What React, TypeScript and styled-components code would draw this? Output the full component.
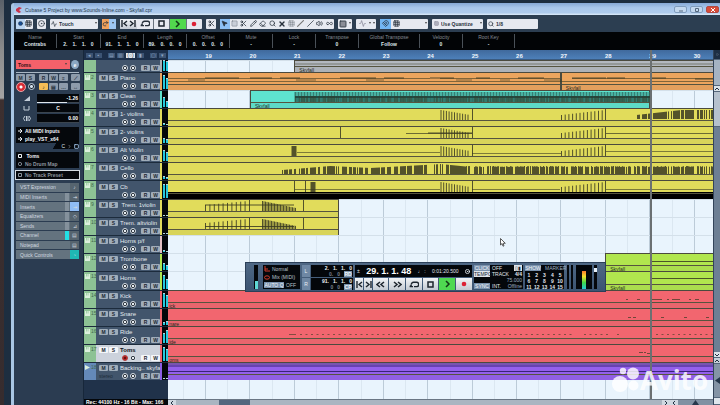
import React from "react";
import styled, { createGlobalStyle, css } from "styled-components";
import {
  Activity, ChevronRight, Circle, CircleDot, Eraser, Grid3x3, Infinity as Glue, Magnet, MousePointer2,
  Pencil, Play, Redo2, Scissors, Search, Slash, Square, Volume2, X,
} from "lucide-react";

const Global = createGlobalStyle`
  * { box-sizing: border-box; }
  body { margin: 0; background: #1d2e40; font: 5px/6px "Liberation Sans", Arial, sans-serif; color: #dfe6ec; }
  button, input, select { font: inherit; color: inherit; margin: 0; padding: 0; border: 0; background: none; border-radius: 0; }
  svg { display: block; flex: none; }
`;

/* ---------- timeline geometry ---------- */
const FIRST_BAR = 18.155;
const BAR_SPAN = 12.27;
const at = (bar: number) => ((bar - FIRST_BAR) / BAR_SPAN) * 100;

/* ---------- window ---------- */
const Desktop = styled.div`
  min-height: 100vh;
  display: grid;
  grid-template-columns: 4px 7px 1fr;
  background: #1d2e40;
`;
const Wallpaper = styled.div`
  background: linear-gradient(#596069 0, #8b8c8c 50px, #a3a3a3 98px, #3d3030 100px, #362c2e 100%);
`;
const Window = styled.main`
  grid-column: 3;
  min-width: 0;
  margin-top: 3px;
  display: flex;
  flex-direction: column;
  border-left: 3px solid #a9c6e4;
  border-top-left-radius: 3px;
  background: #2b3c50;
`;
const TitleBar = styled.header`
  height: 12px;
  display: flex;
  align-items: center;
  gap: 3px;
  padding: 1px 1px 0 2px;
  color: #26384c;
  background: linear-gradient(#86a9d6, #a9c8ec 40%, #aecbec 80%, #dcebfa);
`;
const Title = styled.h1`
  flex: 1;
  margin: 0;
  font-size: 5px;
  font-weight: 400;
`;
const WinButton = styled.button<{ $close?: boolean }>`
  width: 13px;
  height: 7px;
  display: grid;
  place-items: center;
  border: 1px solid ${(p) => (p.$close ? "#b04a44" : "#7f9cbd")};
  border-radius: 2px;
  background: ${(p) => (p.$close ? "#d94b38" : "#c3d8ef")};
  color: ${(p) => (p.$close ? "#fff" : "#54687e")};
`;

/* ---------- toolbar ---------- */
const Toolbar = styled.div`
  height: 17px;
  display: flex;
  align-items: center;
  gap: 4px;
  padding: 0 2px;
  background: #2c3e51;
  color: #28323d;
`;
const Group = styled.div<{ $w: number }>`
  width: ${(p) => p.$w}px;
  height: 10px;
  display: flex;
  align-items: stretch;
  overflow: hidden;
  border-radius: 1px;
  background: #e6e9f0;
`;
const Tool = styled.button<{ $bg?: string; $line?: boolean }>`
  flex: 1;
  min-width: 0;
  display: grid;
  place-items: center;
  background: ${(p) => p.$bg ?? "transparent"};
  border-right: ${(p) => (p.$line ? "1px solid #69737e" : "0")};
`;
const PickerIcon = styled.span`
  width: 8px;
  display: grid;
  place-items: center;
`;
const Picker = styled.select`
  appearance: none;
  flex: 1;
  min-width: 0;
  font-weight: 700;
  padding-left: 1px;
`;
const Caret = styled.span`
  align-self: center;
  margin: 0 1px;
  border: 1px solid transparent;
  border-top: 2px solid #444;
`;

/* ---------- info line ---------- */
const InfoLine = styled.dl`
  margin: 0;
  height: 18px;
  display: grid;
  grid-template-columns: 43px 44px repeat(6, 43px) 61px 43px 52px 1fr;
  background: #020406;
`;
const Info = styled.div`
  margin: 2px 0;
  border-right: 1px solid #4a5158;
  text-align: center;
`;
const InfoLabel = styled.dt`
  height: 7px;
  color: #858c93;
`;
const InfoValue = styled.dd`
  margin: 0;
  font-weight: 700;
  display: flex;
  justify-content: center;
  gap: 5px;
`;

/* ---------- body ---------- */
const Body = styled.div`
  flex: 1;
  display: grid;
  grid-template-columns: 70px 84px 1fr 7px;
`;

/* inspector */
const Inspector = styled.aside`
  padding: 10px 4px 0 2px;
  background: #2b3c51;
  border-right: 1px solid #17273a;
`;
const NameRow = styled.div`
  display: flex;
  gap: 1px;
  height: 9px;
`;
const NameField = styled.button`
  flex: 1;
  display: flex;
  align-items: center;
  justify-content: space-between;
  padding: 0 2px;
  background: #f4616a;
  color: #301014;
  font-weight: 700;
`;
const EditBadge = styled.button`
  width: 8px;
  border-radius: 50%;
  background: #8ba8c4;
  color: #fff;
  font-weight: 700;
`;
const ControlBox = styled.div`
  margin-top: 3px;
  height: 18px;
  display: grid;
  grid-template-columns: 9px 9px 2px repeat(3, 9px) 1px 9px;
  grid-auto-rows: 7px;
  gap: 1px;
  row-gap: 2px;
  padding: 1px 0;
  border-top: 1px solid #a9b7c5;
`;
const MiniButton = styled.button<{ $tone?: string }>`
  background: ${(p) => p.$tone ?? "#8d9bab"};
  color: #26303c;
  font-weight: 700;
  line-height: 6px;
  text-align: center;
  border-radius: 1px;
`;
const RecDot = styled.button`
  width: 10px;
  height: 10px;
  margin: -1px 0 0;
  border-radius: 50%;
  border: 1px solid #eba5a8;
  background: radial-gradient(#fff 0 1px, #d82b34 2px);
`;
const MonDot = styled.button`
  justify-self: end;
  width: 7px;
  height: 7px;
  border-radius: 50%;
  background: radial-gradient(#d5e2ef 0 1px, #17222e 2px);
  border: 1px solid #c0cedb;
`;
const Levels = styled.div`
  margin-top: 4px;
  display: grid;
  grid-template-columns: 21px 1fr;
  grid-auto-rows: 9px;
  row-gap: 1px;
  align-items: center;
  justify-items: center;
`;
const LevelValue = styled.output<{ $fill: number }>`
  justify-self: stretch;
  height: 9px;
  padding: 1px 1px 0;
  text-align: right;
  font-weight: 700;
  color: #fff;
  background: linear-gradient(90deg, #dfe6ec ${(p) => p.$fill}%, #3b454f 0) 0 8px / 100% 1px no-repeat #05080c;
`;
const Routing = styled.div<{ $top: number; $framed?: boolean }>`
  margin-top: ${(p) => p.$top}px;
  background: #05080c;
  outline: ${(p) => (p.$framed ? "1px solid #d5dce3" : "0")};
`;
const RouteRow = styled.div<{ $dim?: boolean }>`
  height: 8px;
  display: flex;
  align-items: center;
  gap: 3px;
  padding: 0 2px;
  font-weight: 700;
  color: ${(p) => (p.$dim ? "#8b949d" : "#f1f4f7")};
`;
const RouteFoot = styled.div`
  height: 6px;
  display: flex;
  justify-content: flex-end;
  align-items: center;
  gap: 2px;
  background: linear-gradient(120deg, #2b3c51 60%, #05080c 61%);
`;
const Sections = styled.nav`
  margin-top: 4px;
  min-height: 76px;
  display: grid;
  grid-template-rows: repeat(8, 1fr);
  gap: 1px;
`;
const SectionTab = styled.button`
  display: grid;
  grid-template-columns: 1fr 4px 9px;
  gap: 1px;
  align-items: center;
  text-align: left;
  padding-left: 4px;
  background: #64737f;
  color: #d3dae0;
`;
const TabLamp = styled.span<{ $on?: boolean }>`
  align-self: stretch;
  background: ${(p) => (p.$on ? "#22dfe6" : "#84919c")};
`;
const TabIcon = styled.span<{ $bg?: string }>`
  align-self: stretch;
  display: grid;
  place-items: center;
  background: ${(p) => p.$bg ?? "#56646f"};
`;

/* track list */
const TrackPane = styled.section`
  display: flex;
  flex-direction: column;
  background: #20324a;
`;
const TrackHead = styled.div`
  height: 10px;
  display: flex;
  align-items: center;
  gap: 2px;
  padding: 0 1px 0 2px;
  background: #1c2f4a;
`;
const HeadKey = styled.button<{ $on?: boolean; $push?: boolean }>`
  width: ${(p) => (p.$on ? 9 : 7)}px;
  height: 5px;
  line-height: 4px;
  margin-left: ${(p) => (p.$push ? "4px" : "0")};
  background: ${(p) => (p.$on ? "#e2e9f0" : "#3c5474")};
  color: ${(p) => (p.$on ? "#1c2f4a" : "#93a9c4")};
`;
const rowBox = css<{ $first?: boolean; $gap?: boolean }>`
  height: ${(p) => (p.$first ? 12 : p.$gap ? 19 : 18)}px;
`;
const TrackRow = styled.article<{ $first?: boolean; $gap?: boolean; $sel?: boolean }>`
  ${rowBox}
  display: grid;
  grid-template-columns: 12px 1fr 2px 6px;
  align-items: end;
  background: ${(p) => (p.$sel ? "#ccd2dc" : "#42556c")};
  color: ${(p) => (p.$sel ? "#101418" : "#e3e9ef")};
  border-top: ${(p) => (p.$first ? "0" : "1px solid #1c2b3c")};
`;
const TrackNo = styled.div<{ $audio?: boolean }>`
  align-self: stretch;
  display: flex;
  gap: 1px;
  padding: 2px 0 2px 1px;
  line-height: 5px;
  color: #3f6a4d;
  background: ${(p) => (p.$audio ? "#6489b9" : "#8dc294")};
`;
const TrackBody = styled.div`
  min-width: 0;
  padding-left: 3px;
  display: grid;
  grid-auto-rows: 8px;
`;
const Line = styled.div<{ $end?: boolean }>`
  display: flex;
  align-items: center;
  justify-content: ${(p) => (p.$end ? "flex-end" : "flex-start")};
  gap: 1px;
  white-space: nowrap;
`;
const Key = styled.button<{ $sel?: boolean; $push?: boolean }>`
  flex: none;
  width: 9px;
  height: 6px;
  margin-left: ${(p) => (p.$push ? 3 : 0)}px;
  border-radius: 1px;
  line-height: 6px;
  font-weight: 700;
  color: #1e2833;
  background: ${(p) => (p.$sel ? "#f4f6f9" : "#a0adba")};
`;
const TrackName = styled.h2<{ $sel?: boolean }>`
  margin: 0 0 0 1px;
  font-size: 6px;
  line-height: 8px;
  font-weight: ${(p) => (p.$sel ? 700 : 400)};
  white-space: pre;
`;
const Channels = styled.span`
  margin-right: auto;
  color: #1d2b3a;
`;
const Dot = styled.button<{ $rec?: boolean }>`
  width: 6px;
  height: 6px;
  margin-right: 1px;
  border-radius: 50%;
  border: 1px solid ${(p) => (p.$rec ? "#a33" : "#d9e0e7")};
  background: ${(p) => (p.$rec ? "radial-gradient(#611 0 1px, #e33 2px)" : "radial-gradient(#e8edf2 0 1px, #141c26 1px)")};
`;
const Strip = styled.div<{ $c: string }>`
  align-self: stretch;
  background: ${(p) => p.$c};
`;
const Meter = styled.div`
  align-self: stretch;
  display: flex;
  align-items: flex-end;
  gap: 1px;
  padding: 0 0 1px 1px;
  background: #04070b;
`;
const MeterBar = styled.i<{ $h: number }>`
  flex: 1;
  height: ${(p) => p.$h}%;
  background: #25c9dd;
  border-top: 1px solid #b4d6de;
`;
const Status = styled.footer`
  margin-top: auto;
  height: 6px;
  padding-left: 2px;
  white-space: nowrap;
  overflow: hidden;
  color: #fff;
  font-weight: 700;
  background: #04070b;
`;

/* arrangement */
const Arrange = styled.section`
  position: relative;
  min-width: 0;
  display: flex;
  flex-direction: column;
  overflow: hidden;
  background: #e9f4fd;
`;
const Ruler = styled.div`
  position: relative;
  height: 10px;
  background: linear-gradient(#40699c, #4d80b9);
  border-bottom: 1px solid #3b5b80;
`;
const BarNumber = styled.span<{ $bar: number }>`
  position: absolute;
  left: ${(p) => at(p.$bar)}%;
  bottom: 0;
  width: 12px;
  margin-left: -3px;
  text-align: center;
  color: #f0f6fc;
  font-size: 6px;
  font-weight: 700;
`;
const Grid = styled.svg`
  position: absolute;
  inset: 10px 0 6px;
  width: 100%;
  height: calc(100% - 16px);
`;
const Lane = styled.div<{ $first?: boolean; $gap?: boolean }>`
  ${rowBox}
  position: relative;
  border-top: 1px solid #d4e0ea;
`;
const Clip = styled.div<{ $from: number; $to: number; $c: string }>`
  position: absolute;
  left: ${(p) => at(p.$from)}%;
  width: ${(p) => at(p.$to) - at(p.$from)}%;
  top: -1px;
  bottom: 0;
  display: flex;
  flex-direction: column;
  justify-content: flex-end;
  border: 1px solid #4b4a3e;
  border-bottom: 0;
  background: ${(p) => p.$c};
`;
const ClipLabel = styled.span<{ $pad: number; $shut?: boolean }>`
  height: 6px;
  padding-left: ${(p) => p.$pad}px;
  line-height: 6px;
  color: #28281f;
  border-top: 1px solid #56543f;
  background: rgba(90, 90, 90, 0.06);
  box-shadow: ${(p) => (p.$shut ? "0 -1px #000, inset 0 5px #000" : "none")};
`;
const NoteArt = styled.svg`
  position: absolute;
  left: 0;
  top: 0;
  width: 100%;
  height: 11px;
  fill: none;
  stroke: #3a3a22;
`;
const Playhead = styled.div`
  position: absolute;
  left: ${at(29)}%;
  top: 0;
  bottom: 6px;
  width: 2px;
  background: #6b7072;
`;
const Pointer = styled.div`
  position: absolute;
  left: 332px;
  top: 188px;
`;
const HScroll = styled.div`
  margin-top: auto;
  height: 6px;
  position: relative;
  display: flex;
  align-items: stretch;
  background: #a9b5c1;
  border-top: 1px solid #6a7684;
  color: #243345;
`;
const ScrollKey = styled.button`
  width: 8px;
  display: grid;
  place-items: center;
  background: #cfd8e1;
`;
const Thumb = styled.div`
  width: 31px;
  margin-left: 43px;
  margin-right: auto;
  background: #53677f;
`;
const Zoom = styled.div`
  width: 35px;
  display: grid;
  place-items: center;
  background: #8091a3;
`;
const VScroll = styled.div`
  display: flex;
  flex-direction: column;
  background: #6d7f94;
  border-left: 1px solid #33445a;
  color: #1d2c3d;
`;
const VPart = styled.div<{ $h: number; $c: string; $push?: boolean }>`
  height: ${(p) => p.$h}px;
  margin-top: ${(p) => (p.$push ? "auto" : "0")};
  display: grid;
  place-items: center;
  background: ${(p) => p.$c};
  border-bottom: 1px solid #54667b;
`;

/* transport panel */
const Transport = styled.section`
  position: absolute;
  left: 77px;
  top: 212px;
  width: 361px;
  height: 30px;
  display: flex;
  gap: 2px;
  padding: 2px 7px 2px 8px;
  background: linear-gradient(#4f6885, #3b5472);
  border: 1px solid #2b3f58;
  color: #e2e8ee;
`;
const Well = styled.div<{ $w: number; $ml?: number }>`
  width: ${(p) => p.$w}px;
  flex: none;
  margin-left: ${(p) => p.$ml ?? 0}px;
  background: #04070b;
`;
const Fader = styled(Well)`
  display: flex;
  align-items: flex-end;
  justify-content: center;
`;
const FaderFill = styled.i<{ $h: number; $rainbow?: boolean }>`
  width: ${(p) => (p.$rainbow ? 4 : 3)}px;
  height: ${(p) => p.$h}px;
  background: ${(p) => (p.$rainbow ? "linear-gradient(#ff7a2a, #f5e02e 30%, #3fd84a 65%, #22c7d8)" : "#5fd8d5")};
`;
const Handle = styled.i`
  align-self: flex-start;
  width: 3px;
  height: 4px;
  margin-top: 3px;
  background: #e8f0f8;
`;
const ModeRow = styled.div`
  height: 8px;
  display: flex;
  align-items: center;
  gap: 2px;
  padding: 0 1px;
  color: #bcc4cc;
  white-space: nowrap;
`;
const Tag = styled.button<{ $w?: number; $lit?: boolean }>`
  flex: none;
  width: ${(p) => p.$w ?? 16}px;
  height: 6px;
  line-height: 6px;
  text-align: center;
  background: ${(p) => (p.$lit ? "#dfe5eb" : "#7991ad")};
  color: ${(p) => (p.$lit ? "#1b2634" : "#f3f6f9")};
`;
const Locators = styled.div`
  width: 51px;
  display: grid;
  grid-template-columns: 8px 1fr;
  gap: 1px;
`;
const LocKey = styled.button`
  background: #6e87a4;
  line-height: 5px;
  color: #e6edf4;
`;
const LocCell = styled.div`
  display: flex;
  flex-direction: column;
  padding: 0 1px;
  background: #04070b;
  font-weight: 700;
`;
const Digits = styled.div<{ $dim?: boolean }>`
  height: 6px;
  display: flex;
  justify-content: flex-end;
  gap: 4px;
  color: ${(p) => (p.$dim ? "#77828d" : "#f0f4f7")};
`;
const Deck = styled.div`
  width: 117px;
  display: grid;
  grid-template-rows: 12px 12px;
  gap: 1px;
`;
const Clock = styled.div`
  display: flex;
  align-items: center;
  justify-content: space-between;
  padding: 0 2px;
  background: #04070b;
`;
const Position = styled.strong`
  font-size: 9px;
  line-height: 10px;
  color: #fff;
`;
const Keys = styled.div`
  display: flex;
  gap: 1px;
`;
const DeckKey = styled.button<{ $w: number; $green?: boolean }>`
  width: ${(p) => p.$w}px;
  display: grid;
  place-items: center;
  color: #1d252e;
  background: ${(p) => (p.$green ? "#4fd951" : "linear-gradient(#f2f4f7, #c4cad3)")};
`;
const ClickRow = styled.div`
  height: 6px;
  display: grid;
  grid-template-columns: 16px 1fr auto;
  gap: 2px;
  padding-right: 1px;
`;
const Push = styled.span`
  text-align: right;
  color: #9fb0c2;
`;
const Markers = styled.ol`
  margin: 1px 0 0;
  padding: 0;
  list-style: none;
  display: grid;
  grid-template-columns: repeat(5, 1fr);
  grid-auto-rows: 6px;
  text-align: center;
  font-weight: 700;
`;

/* watermark */
const Watermark = styled.div`
  position: absolute;
  right: 5px;
  bottom: 11px;
  display: flex;
  align-items: center;
  gap: 1px;
  color: rgba(255, 255, 255, 0.82);
  font: 700 26px/28px "Open Sans", "Noto Sans", sans-serif;
`;

/* ---------- note drawing ---------- */
const tick = (x: number, top: number, bottom = 11) => `M${x} ${top}V${bottom}`;
const noise = (i: number) => Math.abs(Math.sin(i * 12.9898) * 43758.5453) % 1;

const series = (from: number, to: number, step: number, top: (t: number) => number, bottom = 11) => {
  let d = "";
  for (let x = from; x <= to; x += step) d += tick(x, top((x - from) / (to - from)), bottom);
  return d;
};
const falling = series(441, 470, 2.7, (t) => 1 + t * 5) + tick(472.5, 0);
const rising = series(561.5, 605, 3.7, (t) => 6 - t * 5) + tick(605.5, 0);
const dense = (from: number, to: number, top: (x: number) => number, bottom: number) => {
  let d = "";
  for (let x = from; x < to; x += 1) if (noise(x) > 0.3) d += tick(x + 0.5, top(x), bottom);
  return d;
};
const dashes = (list: number[][]) => list.map(([x, y, w]) => `M${x} ${y}h${w}`).join("");
const run = (from: number, to: number, step: number, y: number) => {
  const out: number[][] = [];
  for (let x = from; x < to; x += step) out.push([x, y, 2]);
  return out;
};
const tremolo =
  series(205.5, 248, 4.4, (t) => 5 - t * 4) + tick(249.5, 0) + series(262.5, 296, 1.5, (t) => 1 + t * 7) + tick(303.5, 0);

type Art = { d: string; w?: number; o?: number; c?: string };
type ClipData = { from: number; to: number; c: string; label?: string; pad?: number; shut?: boolean };
type Track = {
  name: string; c: string; meter: [number, number]; first?: boolean; gap?: boolean;
  sel?: boolean; audio?: boolean; clips?: ClipData[]; art?: Art[];
};

const Y = "#e1dc5b";
const R = "#f2666f";
const G = "#b1e64e";
const END = 30.6;
const full = (c: string, label = ""): ClipData[] => [{ from: 18, to: END, c, label, pad: 7 }];

const tracks: Track[] = [
  {
    name: "Pno", c: "#a9aeb4", meter: [100, 90], first: true,
    clips: [{ from: 21, to: END, c: "#b3b8bf", label: "Skyfall", pad: 4 }],
    art: [{ d: "M295 3H714", o: 0.5 }],
  },
  {
    name: "Piano", c: "#eba45e", meter: [85, 70],
    clips: [{ from: 18, to: 27, c: "#eca55e" }, { from: 27, to: END, c: "#eca55e", label: "Skyfall", pad: 4 }],
    art: [
      { d: "M168 5.5H430M440 5.5H560M572 5.5H714M168 8.5H714", o: 0.6 },
      { d: dashes([[205, 5, 34], [250, 5, 22], [280, 5, 20], [340, 5, 36], [384, 5, 20], [430, 5, 24], [476, 5, 14], [518, 5, 26], [572, 5, 34], [607, 5, 18], [652, 5, 14], [695, 6, 18]]) },
      { d: dashes([[188, 7, 17], [296, 7, 20], [366, 7, 18], [456, 7, 16], [500, 7, 10], [544, 7, 18]]), o: 0.6 },
    ],
  },
  {
    name: "Clean", c: "#5de0cc", meter: [60, 40], clips: [{ from: 20, to: 29, c: "#5ee3cf", label: "Skyfall", pad: 4 }],
    art: [
      { d: "M295 8H650", w: 6, c: "#35796f", o: 0.9 },
      { d: series(295.5, 650, 3, () => 1), c: "#2e6d64", w: 2 },
      { d: "M295 6H650", w: 2, c: "#1c443f" },
      { d: dense(295, 650, () => 5, 11), o: 0.4 },
    ],
  },
  {
    name: "1- violins", c: Y, meter: [15, 8], clips: full(Y),
    art: [{ d: falling + rising }, { d: dense(636, 714, (x) => Math.max(1, 6 - (x - 636) / 9), 10) }],
  },
  {
    name: "2- violins", c: Y, meter: [30, 22], clips: full(Y),
    art: [{ d: falling + rising + tick(340.5, 0) }, { d: "M406 6.5H472M606 6.5H714", o: 0.7 }, { d: "M428 6H472" }],
  },
  {
    name: "Alt Violin", c: Y, meter: [70, 55], clips: full(Y),
    art: [
      { d: falling + rising }, { d: "M294 1V11", w: 5 },
      { d: "M297 7.5H440M472 8.5H561M606 6.5H714", o: 0.6 },
    ],
  },
  {
    name: "Cello", c: Y, meter: [20, 12], clips: full(Y),
    art: [
      { d: dense(282, 440, (x) => (x < 330 ? 7 - (x - 282) / 12 : x < 370 ? 3 + (x - 330) / 20 : 5 - (x - 370) / 18), 11) },
      { d: dense(440, 714, (x) => (x < 465 ? 1 + (x - 440) / 10 : 3 + noise(x * 7)), 11) },
    ],
  },
  {
    name: "Cb", c: Y, meter: [80, 80], gap: true, clips: [{ from: 18, to: END, c: Y, shut: true }],
    art: [
      { d: falling + rising + tick(294.5, 0) + tick(305.5, 0) }, { d: "M313 1V11", w: 5 },
      { d: "M295 8.5H440M472 8.5H560M606 8.5H714", o: 0.6 },
    ],
  },
  {
    name: " Trem. 1violin", c: Y, meter: [8, 5], clips: [{ from: 18, to: 22, c: Y }],
    art: [{ d: tremolo }, { d: "M205 5H294" }],
  },
  {
    name: "Trem. altviolin", c: Y, meter: [5, 8], clips: [{ from: 18, to: 22, c: Y }],
    art: [{ d: tremolo }, { d: "M205 8.5H294" }],
  },
  { name: "Horns p/f", c: "#e5c0c4", meter: [12, 5] },
  {
    name: "Trombone", c: G, meter: [45, 30], clips: [{ from: 28, to: END, c: G, label: "Skyfall", pad: 4 }],
    art: [{ d: "M651 7.5H714" }],
  },
  {
    name: "Horns", c: G, meter: [80, 60], gap: true, clips: [{ from: 28, to: END, c: G, label: "Skyfall", pad: 4 }],
    art: [{ d: "M651 6.5H714" }],
  },
  {
    name: "Kick", c: R, meter: [88, 78], clips: full(R, "ick"),
    art: [{ d: dashes([[626, 8.5, 2], [637, 8.5, 3], [652, 8.5, 10], [667, 8.5, 2], [672, 8.5, 8], [689, 8.5, 2], [695, 8.5, 4]]), o: 0.7 }],
  },
  {
    name: "Snare", c: R, meter: [18, 28], clips: full(R, "nare"),
    art: [{ d: dashes([[628, 8.5, 3], [633, 8.5, 3], [661, 8.5, 3], [684, 8.5, 3], [706, 8.5, 3]]), o: 0.7 }],
  },
  {
    name: "Ride", c: R, meter: [60, 80], clips: full(R, "ide"),
    art: [{ d: dashes([[289, 7.5, 7], ...run(300, 575, 5.5, 7.5), ...run(584, 607, 5.5, 7.5), [617, 7.5, 2], ...run(656, 714, 5.5, 7.5)]), o: 0.6 }],
  },
  { name: "Toms", c: R, meter: [86, 76], sel: true, clips: full(R, "oms"), art: [{ d: dashes([[639, 7.5, 4], [644, 7.5, 2], [647, 8.5, 3]]), o: 0.7 }] },
  {
    name: "Backing.. skyfa", c: "#8c5ce6", meter: [0, 0], audio: true, clips: [{ from: 18, to: END, c: "#9460ec" }],
    art: [{ d: "M168 3H714M168 8.5H714", w: 1, c: "#2a1a63" }, { d: "M168 1H714", w: 2, o: 0.3 }],
  },
];

const infos: [string, string[]][] = [
  ["Name", ["Contrabs"]], ["Start", ["2.", "1.", "1.", "0"]], ["End", ["91.", "1.", "1.", "0"]],
  ["Length", ["89.", "0.", "0.", "0"]], ["Offset", ["0.", "0.", "0.", "0"]], ["Mute", ["-"]], ["Lock", ["-"]],
  ["Transpose", ["0"]], ["Global Transpose", ["Follow"]], ["Velocity", ["0"]], ["Root Key", ["-"]],
];

const sections: { name: string; lamp?: number; bg?: string; icon: string }[] = [
  { name: "VST Expression", icon: "♪" }, { name: "MIDI Inserts", lamp: 0, icon: "⇥" },
  { name: "Inserts", lamp: 0, bg: "#8fbcf5", icon: "⇥" },
  { name: "Equalizers", lamp: 0, icon: "◇" }, { name: "Sends", lamp: 0, icon: "⊿" },
  { name: "Channel", lamp: 1, icon: "▤" }, { name: "Notepad", icon: "▤" },
  { name: "Quick Controls", bg: "#1fb8b4", icon: "◔" },
];

const bars = Array.from({ length: 12 }, (_, i) => i + 19);
const I = { size: 7, strokeWidth: 2.5 };

const SkipIcon = ({ flip }: { flip?: boolean }) => (
  <svg width="7" height="7" viewBox="0 0 7 7" fill="none" stroke="currentColor" strokeWidth="1.4">
    <path d={flip ? "M6 0V7M1 1L4 3.5L1 6" : "M1 0V7M6 1L3 3.5L6 6"} />
  </svg>
);
const SeekIcon = ({ fwd }: { fwd?: boolean }) => (
  <svg width="9" height="7" viewBox="0 0 9 7" fill="none" stroke="currentColor" strokeWidth="1.5">
    <path d={fwd ? "M1 1L4 3.5L1 6M5 1L8 3.5L5 6" : "M4 1L1 3.5L4 6M8 1L5 3.5L8 6"} />
  </svg>
);
const CycleIcon = () => (
  <svg width="10" height="7" viewBox="0 0 10 7" fill="none" stroke="currentColor" strokeWidth="1.4">
    <path d="M5 5.6H8A2.2 2.2 0 0 0 8 1.3H4.5A2.2 2.2 0 0 0 2.3 3.6M0.6 5.6H4M2.6 4L1 5.6" />
  </svg>
);
const StopIcon = () => (
  <svg width="7" height="7" viewBox="0 0 7 7" fill="none" stroke="#1d252e" strokeWidth="1.5"><path d="M1 1H6V6H1Z" /></svg>
);
const PlayIcon = () => (
  <svg width="7" height="8" viewBox="0 0 7 8" fill="none" stroke="#123816" strokeWidth="1.5"><path d="M2 1L5 4L2 7" /></svg>
);
const RecIcon = () => (
  <svg width="6" height="6" viewBox="0 0 6 6"><circle cx="3" cy="3" r="2.3" fill="#dc2236" /></svg>
);
const Arrow = ({ d }: { d: string }) => (
  <svg width="4" height="4" viewBox="0 0 4 4" fill="none" stroke="currentColor"><path d={d} /></svg>
);

const TrackItem = ({ t, n }: { t: Track; n: number }) => (
  <TrackRow $first={t.first} $gap={t.gap} $sel={t.sel}>
    <TrackNo $audio={t.audio}>
      {!t.first && (
        <svg width="5" height="5" viewBox="0 0 5 5" fill="#dcf0dd">
          <path d={t.audio ? "M0 0L5 2.5L0 5Z" : "M0 0H1V2.5H1.7V0H2.7V2.5H3.4V0H5V5H0Z"} />
        </svg>
      )}
      {!t.first && <span>{n}</span>}
    </TrackNo>
    <TrackBody>
      {!t.first && (
        <Line>
          <Key $sel={t.sel} aria-label={`Mute ${t.name}`}>M</Key>
          <Key $sel={t.sel} aria-label={`Solo ${t.name}`}>S</Key>
          <TrackName $sel={t.sel}>{t.name}</TrackName>
        </Line>
      )}
      <Line $end>
        {t.audio && <Channels>stereo</Channels>}
        <Dot $rec={t.sel} aria-label={`Record ${t.name}`} />
        <Dot aria-label={`Monitor ${t.name}`} />
        <Key $sel={t.sel} $push aria-label={`Read ${t.name}`}>R</Key>
        <Key $sel={t.sel} aria-label={`Write ${t.name}`}>W</Key>
      </Line>
    </TrackBody>
    <Strip $c={t.c} />
    <Meter><MeterBar $h={t.meter[0]} /><MeterBar $h={t.meter[1]} /></Meter>
  </TrackRow>
);

const LaneItem = ({ t }: { t: Track }) => (
  <Lane $first={t.first} $gap={t.gap}>
    {t.clips?.map((c) => (
      <Clip key={c.from} $from={c.from} $to={c.to} $c={c.c}>
        <ClipLabel $pad={c.pad ?? 0} $shut={c.shut}>{c.label}</ClipLabel>
      </Clip>
    ))}
    {t.art && (
      <NoteArt viewBox="168 0 545 11" preserveAspectRatio="none" aria-hidden>
        {t.art.map((a, i) => (
          <path key={i} d={a.d} strokeWidth={a.w ?? 1} opacity={a.o ?? 0.85} stroke={a.c} />
        ))}
      </NoteArt>
    )}
  </Lane>
);

const TransportPanel = () => (
  <Transport aria-label="Transport">
    <Fader $w={4}><FaderFill $h={8} /></Fader>
    <Well $w={37} $ml={3}>
      <ModeRow><svg width="6" height="6" viewBox="0 0 6 6" fill="none" stroke="#d43c2c"><path d="M1 0V5H6M1 3H4" /></svg>Normal</ModeRow>
      <ModeRow><svg width="6" height="6" viewBox="0 0 6 6" fill="none" stroke="#d43c2c"><ellipse cx="3" cy="3.5" rx="2.5" ry="1.7" /></svg>Mix (MIDI)</ModeRow>
      <ModeRow><Tag $w={20}>AUTO Q</Tag>OFF</ModeRow>
    </Well>
    <Locators>
      <LocKey>L</LocKey>
      <LocCell>
        <Digits><span>2.</span><span>1.</span><span>1.</span><span>0</span></Digits>
        <Digits $dim><span>0.</span><span>0</span><Tag $w={8}>RD</Tag></Digits>
      </LocCell>
      <LocKey>R</LocKey>
      <LocCell>
        <Digits><span>91.</span><span>1.</span><span>1.</span><span>0</span></Digits>
        <Digits $dim><span>0</span><span>0</span><Tag $w={8}>CP</Tag></Digits>
      </LocCell>
    </Locators>
    <Deck>
      <Clock>
        <span>±</span>
        <Position>29. 1. 1. 48</Position>
        <span>♩ :</span>
        <span>0:01:20.500</span>
        <CircleDot size={5} strokeWidth={4} />
      </Clock>
      <Keys>
        <DeckKey $w={8} aria-label="To start"><SkipIcon /></DeckKey>
        <DeckKey $w={8} aria-label="To end"><SkipIcon flip /></DeckKey>
        <DeckKey $w={15} aria-label="Rewind"><SeekIcon /></DeckKey>
        <DeckKey $w={16} aria-label="Forward"><SeekIcon fwd /></DeckKey>
        <DeckKey $w={16} aria-label="Cycle"><CycleIcon /></DeckKey>
        <DeckKey $w={15} aria-label="Stop"><StopIcon /></DeckKey>
        <DeckKey $w={16} $green aria-label="Play"><PlayIcon /></DeckKey>
        <DeckKey $w={16} aria-label="Record"><RecIcon /></DeckKey>
      </Keys>
    </Deck>
    <Well $w={49}>
      <ClickRow><Tag>CLICK</Tag><span>OFF</span><Tag $w={8} $lit>▯▮</Tag></ClickRow>
      <ClickRow><Tag $lit>TEMPO</Tag><span>TRACK</span><b>4/4</b></ClickRow>
      <ClickRow><span /><span /><Push>75.000</Push></ClickRow>
      <ClickRow><Tag>SYNC</Tag><span>INT.</span><Push>Offline</Push></ClickRow>
    </Well>
    <Well $w={39}>
      <ClickRow><Tag>SHOW</Tag><span /><Push>MARKER</Push></ClickRow>
      <Markers>{Array.from({ length: 15 }, (_, i) => <li key={i}>{i + 1}</li>)}</Markers>
    </Well>
    <Well $w={2} $ml={1} /><Well $w={2} />
    <Fader $w={16} $ml={1}><FaderFill $h={18} $rainbow /></Fader>
    <Fader $w={3}><Handle /></Fader>
  </Transport>
);

export default function App() {
  return (
    <>
      <Global />
      <Desktop>
        <Wallpaper />
        <Window>
          <TitleBar>
            <svg width="6" height="6" viewBox="0 0 6 6" fill="#c8324a"><path d="M0 2L3 0L6 1L3 3L5 5L3 6L0 4Z" /></svg>
            <Title>Cubase 5 Project by www.Sounds-Inline.com - Skyfall.cpr</Title>
            <WinButton aria-label="Minimize"><Arrow d="M0 3H4" /></WinButton>
            <WinButton aria-label="Maximize"><Arrow d="M0.5 0.5H3.5V3.5H0.5Z" /></WinButton>
            <WinButton $close aria-label="Close"><Arrow d="M0 0L4 4M4 0L0 4" /></WinButton>
          </TitleBar>

          <Toolbar>
            <Group $w={17}><Tool $bg="#bcd6f2" aria-label="Active project"><Circle size={5} fill="#174c92" /></Tool><Tool aria-label="Delay compensation"><Grid3x3 {...I} /></Tool></Group>
            <Group $w={9}><Tool aria-label="Automation"><CircleDot {...I} /></Tool></Group>
            <Group $w={48}><PickerIcon><Activity {...I} size={6} /></PickerIcon><Picker aria-label="Automation mode" defaultValue="Touch"><option>Touch</option></Picker><Caret /></Group>
            <Group $w={14}><Tool $bg="#f1a25c" aria-label="Auto-scroll"><Redo2 {...I} /></Tool><Tool $bg="#9cc6f3" aria-label="Suspend"><Caret /></Tool></Group>
            <Group $w={82}>
              <DeckKey $w={8} aria-label="Previous marker"><SkipIcon /></DeckKey>
              <DeckKey $w={9} aria-label="Next marker"><SkipIcon flip /></DeckKey>
              <Tool $line aria-label="Cycle"><CycleIcon /></Tool>
              <Tool $line aria-label="Stop"><StopIcon /></Tool>
              <Tool $bg="#52d94e" $line aria-label="Play"><PlayIcon /></Tool>
              <Tool aria-label="Record"><RecIcon /></Tool>
            </Group>
            <Group $w={10}><Tool aria-label="Constrain"><Scissors {...I} /></Tool></Group>
            <Group $w={114}>
              <Tool $bg="#8dc0f5" aria-label="Select"><MousePointer2 {...I} fill="currentColor" /></Tool>
              <Tool aria-label="Range"><Square {...I} fill="#c9ced8" strokeWidth={1} /></Tool>
              <Tool aria-label="Split"><Scissors {...I} /></Tool>
              <Tool aria-label="Draw"><Pencil {...I} /></Tool>
              <Tool aria-label="Erase"><Eraser {...I} /></Tool>
              <Tool aria-label="Zoom"><Search {...I} /></Tool>
              <Tool aria-label="Mute"><X {...I} size={8} strokeWidth={4} /></Tool>
              <Tool aria-label="Time warp"><Grid3x3 {...I} strokeWidth={1} /></Tool>
              <Tool aria-label="Brush"><Slash {...I} strokeWidth={4} color="#777" /></Tool>
              <Tool aria-label="Line"><Slash {...I} /></Tool>
              <Tool aria-label="Play tool"><Volume2 {...I} /></Tool>
              <Tool aria-label="Glue"><Glue {...I} /></Tool>
            </Group>
            <Group $w={14}><Tool aria-label="Colour"><Square {...I} size={8} fill="#8a8d96" /></Tool><Caret /></Group>
            <Group $w={20}><Tool aria-label="Nudge"><Activity {...I} color="#889" /></Tool><Caret /><Caret /></Group>
            <Group $w={48}>
              <Tool $bg="#72b6f4" aria-label="Snap"><Magnet {...I} /></Tool>
              <Tool aria-label="Grid"><Grid3x3 {...I} /></Tool>
              <Tool as="span" /><Tool as="span" /><Caret />
            </Group>
            <Group $w={51}><PickerIcon><Grid3x3 {...I} size={5} color="#889" /></PickerIcon><Picker aria-label="Grid type" defaultValue="Use Quantize"><option>Use Quantize</option></Picker><Caret /></Group>
            <Group $w={51}><PickerIcon><Search {...I} size={6} /></PickerIcon><Picker aria-label="Quantize" defaultValue="1/8"><option>1/8</option></Picker></Group>
          </Toolbar>

          <InfoLine>
            {infos.map(([label, parts]) => (
              <Info key={label}>
                <InfoLabel>{label}</InfoLabel>
                <InfoValue>{parts.map((p, i) => <span key={i}>{p}</span>)}</InfoValue>
              </Info>
            ))}
          </InfoLine>

          <Body>
            <Inspector>
              <NameRow><NameField>Toms<Caret /></NameField><EditBadge aria-label="Edit">e</EditBadge></NameRow>
              <ControlBox>
                <MiniButton>M</MiniButton><MiniButton>S</MiniButton><span />
                <MiniButton>R</MiniButton><MiniButton>W</MiniButton><MiniButton>≡</MiniButton><span /><MiniButton>⟋</MiniButton>
                <RecDot aria-label="Record" /><MonDot aria-label="Monitor" /><span />
                <MiniButton $tone="#f5bd55">♪</MiniButton><MiniButton>▤</MiniButton><MiniButton>…</MiniButton><span /><MiniButton>↔</MiniButton>
              </ControlBox>
              <Levels>
                <svg width="6" height="5" viewBox="0 0 6 5" fill="#c3ced9"><path d="M0 5L6 0V5Z" /></svg>
                <LevelValue $fill={72}>-1.26</LevelValue>
                <svg width="7" height="5" viewBox="0 0 7 5" stroke="#c3ced9" fill="none"><path d="M1 0V4H6V0" /></svg>
                <LevelValue $fill={0} as="div"><InfoValue as="span">C</InfoValue></LevelValue>
                <svg width="8" height="5" viewBox="0 0 8 5" stroke="#c3ced9" fill="none"><path d="M2 0L0.5 2.5L2 5M6 0L7.5 2.5L6 5M3.5 0V5M5 0V5" /></svg>
                <LevelValue $fill={0}>0.00</LevelValue>
              </Levels>
              <Routing $top={4}>
                <RouteRow><Arrow d="M0 2H4M2 0L4 2L2 4" />All MIDI Inputs</RouteRow>
                <RouteRow><Arrow d="M0 2H4M2 0L4 2L2 4" />play_VST_x64</RouteRow>
                <RouteFoot>C <ChevronRight size={5} /><Square size={5} color="#9fc3e8" strokeWidth={4} /></RouteFoot>
              </Routing>
              <Routing $top={3}>
                <RouteRow><Arrow d="M0.5 0.5H3.5V3.5H0.5Z" />&nbsp;Toms</RouteRow>
                <RouteRow $dim><Circle size={4} strokeWidth={5} />No Drum Map</RouteRow>
              </Routing>
              <Routing $top={3} $framed><RouteRow $dim><Arrow d="M0.5 0.5H3.5V3.5H0.5Z" />No Track Preset</RouteRow></Routing>
              <Sections>
                {sections.map((s) => (
                  <SectionTab key={s.name}>
                    <span>{s.name}</span>
                    {s.lamp === undefined ? <span /> : <TabLamp $on={s.lamp === 1} />}
                    <TabIcon $bg={s.bg}>{s.icon}</TabIcon>
                  </SectionTab>
                ))}
              </Sections>
            </Inspector>

            <TrackPane>
              <TrackHead>
                <HeadKey>◂</HeadKey><HeadKey>▪</HeadKey><HeadKey $push>▤</HeadKey><HeadKey>▥</HeadKey>
                <HeadKey $on>(○)</HeadKey><HeadKey>▮</HeadKey><HeadKey $push>▢</HeadKey><HeadKey>▾</HeadKey>
              </TrackHead>
              {tracks.map((t, i) => <TrackItem key={t.name} t={t} n={i + 1} />)}
              <Status>Rec: 44100 Hz - 16 Bit - Max: 166</Status>
            </TrackPane>

            <Arrange>
              <Ruler>{bars.map((b) => <BarNumber key={b} $bar={b}>{b}</BarNumber>)}</Ruler>
              <Grid viewBox="168 0 545 340" preserveAspectRatio="none" fill="none" aria-hidden>
                {bars.map((b) => <path key={b} d={`M${206 + Math.round(44.42 * (b - 19)) - 0.5} 0V340`} stroke="#bccbd8" />)}
                {bars.map((b) => <path key={b} d={`M${183.5 + Math.round(44.42 * (b - 19))} 0V340`} stroke="#dbe7f1" />)}
              </Grid>
              {tracks.map((t) => <LaneItem key={t.name} t={t} />)}
              <HScroll>
                <ScrollKey aria-label="Scroll left"><Arrow d="M3 0L1 2L3 4" /></ScrollKey>
                <Thumb />
                <ScrollKey aria-label="Scroll right"><Arrow d="M1 0L3 2L1 4" /></ScrollKey>
                <ScrollKey aria-label="Zoom out"><Arrow d="M3 0L1 2L3 4" /></ScrollKey>
                <Zoom><svg width="7" height="5" viewBox="0 0 7 5" fill="#26384c"><path d="M0 5L3.5 0L7 5Z" /></svg></Zoom>
              </HScroll>
              <Playhead />
              <TransportPanel />
              <Pointer>
                <svg width="6" height="9" viewBox="0 0 6 9" fill="#fff" stroke="#333" strokeWidth="0.8"><path d="M0.5 0.5V7L2 5.6L3 8.2L4 7.8L3.1 5.3H5.3Z" /></svg>
              </Pointer>
              <Watermark>
                <svg width="28" height="26" viewBox="0 0 28 26" fill="currentColor">
                  <circle cx="12" cy="4" r="3.2" /><circle cx="22" cy="6.5" r="6" />
                  <circle cx="9" cy="17" r="8" /><circle cx="22.5" cy="18.5" r="5" />
                </svg>
                Avito
              </Watermark>
            </Arrange>

            <VScroll>
              <VPart $h={10} $c="#1d2e44"><Play size={3} color="#9ab" /></VPart>
              <VPart $h={26} $c="#a5b3c2" />
              <VPart $h={6} $c="#dbe3ea"><Arrow d="M0 3L2 1L4 3" /></VPart>
              <VPart $h={35} $c="#b5c1ce" />
              <VPart $h={6} $c="#dbe3ea" $push><Arrow d="M0 1L2 3L4 1" /></VPart>
              <VPart $h={6} $c="#c6d0da"><Arrow d="M0 3L2 1L4 3" /></VPart>
              <VPart $h={34} $c="#8494a6"><svg width="5" height="7" viewBox="0 0 5 7" fill="#26384c"><path d="M0 3.5L5 0V7Z" /></svg></VPart>
              <VPart $h={7} $c="#dfe6ed" />
            </VScroll>
          </Body>
        </Window>
      </Desktop>
    </>
  );
}
